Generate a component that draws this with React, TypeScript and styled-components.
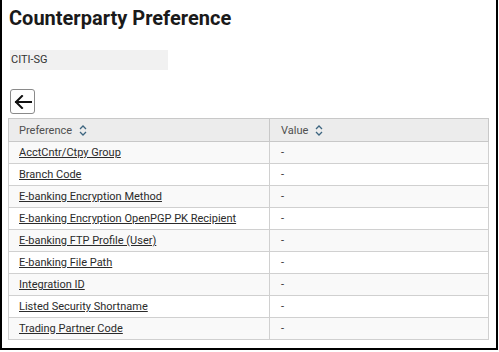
import * as React from "react"
import styled, { createGlobalStyle } from 'styled-components'

const GlobalStyle = createGlobalStyle`
  body {
    margin: 0;
    background: #fff;
    font-family: Roboto, "Liberation Sans", Arial, sans-serif;
  }
`;

const rows = [
  'AcctCntr/Ctpy Group',
  'Branch Code',
  'E-banking Encryption Method',
  'E-banking Encryption OpenPGP PK Recipient',
  'E-banking FTP Profile (User)',
  'E-banking File Path',
  'Integration ID',
  'Listed Security Shortname',
  'Trading Partner Code',
];

const SortIcon: React.FC = () => (
  <SortST viewBox="0 0 8 11" aria-hidden="true">
    <path d="M1 4 L4 1 L7 4 M1 7 L4 10 L7 7" fill="none" stroke="currentColor" strokeWidth="1.3" />
  </SortST>
);

const BackIcon: React.FC = () => (
  <svg width="18" height="14" viewBox="0 0 18 14" aria-hidden="true">
    <path d="M17 7 H2 M8 1 L2 7 L8 13" fill="none" stroke="#111" strokeWidth="2" strokeLinecap="square" />
  </svg>
);

export default function App() {
  return (
    <>
      <GlobalStyle />
      <Frame>
        <Title>Counterparty Preference</Title>
        <Field>CITI-SG</Field>
        <BackButton type="button" aria-label="Back">
          <BackIcon />
        </BackButton>
        <Table>
          <thead>
            <tr>
              <Th $first>Preference <SortIcon /></Th>
              <Th>Value <SortIcon /></Th>
            </tr>
          </thead>
          <tbody>
            {rows.map((name, i) => (
              <Tr key={name} $striped={i % 2 === 0}>
                <Td $first><LinkText href="#">{name}</LinkText></Td>
                <Td>-</Td>
              </Tr>
            ))}
          </tbody>
        </Table>
      </Frame>
    </>
  )
}

const Frame = styled.div`
  box-sizing: border-box;
  width: 498px;
  height: 350px;
  border-left: 2px solid #000;
  border-right: 2px solid #000;
  border-bottom: 2px solid #000;
  padding: 6px 0 0 6px;
  display: flex;
  flex-direction: column;
  align-items: flex-start;
`;

const Title = styled.h1`
  margin: 0;
  font-family: Roboto, "Liberation Sans", Arial, sans-serif;
  font-size: 20px;
  line-height: 24px;
  font-weight: bold;
  color: #1a1a1a;
  padding-left: 1px;
`;

const Field = styled.div`
  box-sizing: border-box;
  margin: 20px 0 0 2px;
  width: 158px;
  height: 20px;
  background: #f1f1f1;
  font-size: 11px;
  line-height: 20px;
  color: #333;
  padding-left: 1px;
`;

const BackButton = styled.button`
  box-sizing: border-box;
  margin: 19px 0 0 2px;
  width: 25px;
  height: 25px;
  padding: 0;
  display: flex;
  align-items: center;
  justify-content: center;
  background: #fff;
  border: 1px solid #8a8a8a;
  border-radius: 3px;
`;

const Table = styled.table`
  margin-top: 4px;
  width: 481px;
  border-collapse: collapse;
  font-size: 11px;
  color: #333;
`;

const Th = styled.th<{ $first?: boolean }>`
  width: ${({ $first }) => ($first ? '250px' : 'auto')};
  height: 22px;
  padding: 0 0 0 ${({ $first }) => ($first ? '10px' : '11px')};
  text-align: left;
  font-weight: normal;
  color: #4f4f4f;
  background: #ececec;
  border: 1px solid #c8c8c8;
  white-space: nowrap;
`;

const Tr = styled.tr<{ $striped: boolean }>`
  background: ${({ $striped }) => ($striped ? '#f9f9f9' : '#fff')};
`;

const Td = styled.td<{ $first?: boolean }>`
  height: 21px;
  padding: 0 0 0 ${({ $first }) => ($first ? '10px' : '11px')};
  border: 1px solid #d0d0d0;
  color: #333;
`;

const LinkText = styled.a`
  color: #2b2b2b;
  text-decoration: underline;
`;

const SortST = styled.svg`
  width: 8px;
  height: 11px;
  margin-left: 4px;
  vertical-align: -2px;
  color: #3d6580;
`;
